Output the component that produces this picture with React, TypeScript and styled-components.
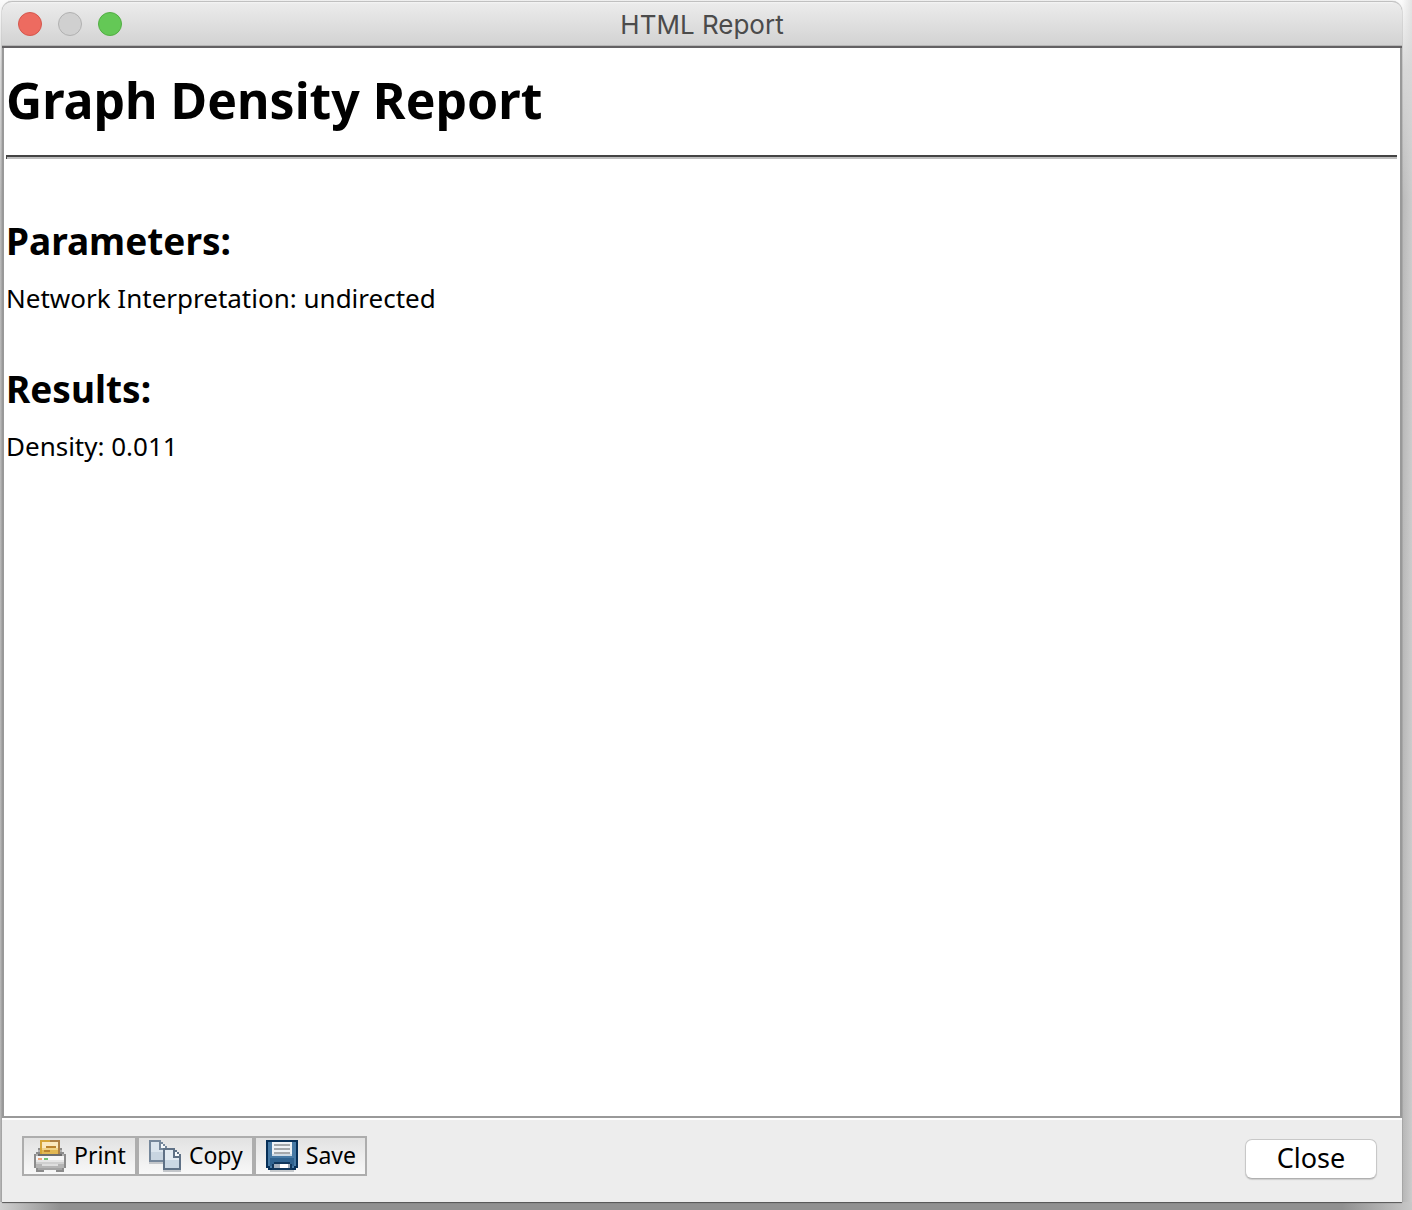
import React from "react";
import styled, { createGlobalStyle } from "styled-components";

const GlobalStyle = createGlobalStyle`
  *, *::before, *::after { box-sizing: border-box; }
  html, body { margin: 0; padding: 0; }
  body { background: #fff; }
`;

const sans = `"Noto Sans", "Open Sans", sans-serif`;

const Desktop = styled.div`
  min-height: 100vh;
  padding: 1px 10px 8px 2px;
  display: flex;
  overflow: hidden;
  background:
    linear-gradient(90deg, #d0d0d0 0, #919191 60px, #919191 calc(100% - 70px), #c8c8c8 100%) bottom / 100% 8px no-repeat,
    linear-gradient(90deg, #b4b4b400, #d8d8d8aa) right / 10px 100% no-repeat,
    linear-gradient(180deg, #fbfbfb 0, #d8d8d8 70px, #b8b8b8 200px, #b4b4b4 100%);
`;

const Window = styled.main`
  flex: 1;
  display: flex;
  flex-direction: column;
  min-width: 0;
  border-radius: 10px 10px 0 0;
  background: #ededed;
  box-shadow: 0 1px 1px #555, 0 0 1px #888;
  font-family: ${sans};
  color: #000;
`;

const TitleBar = styled.header`
  display: grid;
  grid-template-columns: 1fr auto 1fr;
  align-items: center;
  height: 47px;
  padding: 0 16px;
  border-top: 1px solid #c0c0c0;
  border-bottom: 2px solid #636163;
  border-radius: 10px 10px 0 0;
  background: linear-gradient(180deg, #f5f5f5 0, #ebebeb 2px, #d2d2d2 100%);
  box-shadow: inset 0 -1px 0 #b5b5b5;
`;

const Lights = styled.div`
  display: flex;
  gap: 16px;
`;

const Light = styled.button<{ $fill: string; $edge: string }>`
  width: 24px;
  height: 24px;
  padding: 0;
  border: 1px solid ${(p) => p.$edge};
  border-radius: 50%;
  background: ${(p) => p.$fill};
`;

const WindowTitle = styled.span`
  padding-top: 2px;
  font-family: Inter, Roboto, sans-serif;
  font-size: 26px;
  line-height: 32px;
  color: #4b4b4b;
`;

const Report = styled.article`
  flex: 1;
  padding: 0 3px 0 2px;
  border: 2px solid #999;
  border-top: 0;
  background: #fff;
`;

const Heading = styled.h1`
  margin: 18px 0 21px;
  font-size: 50px;
  line-height: 68px;
  font-weight: 700;
`;

const Rule = styled.hr`
  height: 4px;
  margin: 0;
  border: 0;
  border-top: 2px solid #444;
  border-left: 1px solid #444;
  background: #bebebe;
`;

const Section = styled.section`
  padding-top: 59px;

  & + & { padding-top: 48px; }
`;

const SectionTitle = styled.h2`
  margin: 0 0 14px;
  font-size: 37px;
  line-height: 46px;
  font-weight: 700;
`;

const Line = styled.p`
  margin: 0;
  font-size: 26px;
  line-height: 40px;
`;

const Footer = styled.footer`
  display: flex;
  justify-content: space-between;
  align-items: flex-start;
  height: 84px;
  padding: 16px 25px 0 20px;
  border-top: 2px solid #fff;
`;

const Tools = styled.div`
  display: flex;
`;

const ToolButton = styled.button`
  display: flex;
  align-items: center;
  gap: 8px;
  height: 40px;
  padding: 0 9px 0 10px;
  border: 2px solid #adadad;
  background: linear-gradient(180deg, #e2e2e2, #f8f8f8);
  font-family: ${sans};
  font-size: 23px;
  line-height: 30px;
  color: #000;
`;

const ToolLabel = styled.span`
  padding-bottom: 2px;
`;

const CloseButton = styled.button`
  width: 132px;
  height: 40px;
  margin-top: 3px;
  padding: 0 0 2px;
  border: 1px solid #c8c8c8;
  border-bottom-color: #b0b0b0;
  border-radius: 7px;
  background: #fff;
  box-shadow: 0 1px 1px #ccc;
  font-family: ${sans};
  font-size: 27px;
  line-height: 36px;
  color: #000;
`;

const Glyph = styled.svg`
  display: block;
  width: 32px;
  height: 32px;
  flex: none;
`;

const PrintIcon = () => (
  <Glyph viewBox="0 0 16 16" shapeRendering="crispEdges" aria-hidden="true">
    <path fill="#8c8c8c" d="M2 4h12v2h1v1h1v7h-1v2h-4v-1H5v1H1v-2H0V7h1V6h1z" />
    <path fill="#b2b2b2" d="M2 5h12v1H2zM1 7h14v1H1z" />
    <path fill="#f6f6f6" d="M1 8h14v2H1z" />
    <path fill="#e6e6e6" d="M1 10h14v1H1z" />
    <path fill="#cfcfcf" d="M1 11h14v1H1z" />
    <path fill="#b5b5b5" d="M1 12h14v2H1z" />
    <path fill="#dedede" d="M4 12h8v1H4z" />
    <path fill="#a3a3a3" d="M2 14h12v1H2z" />
    <path fill="#6d6d6d" d="M2 7h12v1H2z" />
    <path fill="#d5a535" d="M3 0h10v7H3z" />
    <path fill="#ad8145" d="M8 0h5v7h-1V1H8z" />
    <path fill="#fae9bd" d="M4 1h8v3H4z" />
    <path fill="#f1d487" d="M4 4h8v1H4z" />
    <path fill="#e2b751" d="M4 5h8v2H4z" />
    <path fill="#b9832d" d="M6 3h5v1H6zM5 5h3v1H5z" />
    <path fill="#f0a57a" d="M2 9h2v1H2z" />
    <path fill="#6fbf73" d="M5 9h2v1H5z" />
  </Glyph>
);

const CopyIcon = () => (
  <Glyph viewBox="0 0 16 16" shapeRendering="crispEdges" aria-hidden="true">
    <path fill="#c3c6ca" d="M0 11h7v1H0zM7 15h9v1H7z" />
    <path fill="#75879b" d="M0 0h6v1h1v1h1v1h1v8H0z" />
    <path fill="#dbe5ee" d="M1 1h4v4h3v5H1z" />
    <path fill="#c8d5e1" d="M1 6h7v4H1z" />
    <path fill="#f7fafc" d="M6 2h1v1h1v1H6z" />
    <path fill="#5f7186" d="M7 4h6v1h1v1h1v1h1v8H7z" />
    <path fill="#e3ebf2" d="M8 5h4v4h3v5H8z" />
    <path fill="#cbd8e4" d="M8 10h7v4H8z" />
    <path fill="#f7fafc" d="M13 6h1v1h1v1h-2z" />
  </Glyph>
);

const SaveIcon = () => (
  <Glyph viewBox="0 0 16 16" shapeRendering="crispEdges" aria-hidden="true">
    <path fill="#c6c9cc" d="M2 15h12v1H2z" />
    <path fill="#062f57" d="M0 0h16v14h-1v1H1v-1H0z" />
    <path fill="#477aa5" d="M1 1h14v12h-1v1H2v-1H1z" />
    <path fill="#2f628f" d="M2 9h12v4H2z" />
    <path fill="#eef2f5" d="M3 1h10v7H3z" />
    <path fill="#cfdbe5" d="M3 7h10v1H3z" />
    <path fill="#a4a8ab" d="M4 2h8v1H4zM4 4h8v1H4zM4 6h8v1H4z" />
    <path fill="#10365b" d="M4 11h8v1h1v3H3v-3h1z" />
    <path fill="#a5b1bf" d="M4 12h8v2H4z" />
    <path fill="#fff" d="M7 12h4v2H7z" />
  </Glyph>
);

export default function App() {
  return (
    <>
      <GlobalStyle />
      <Desktop>
        <Window>
          <TitleBar>
            <Lights>
              <Light type="button" aria-label="Close window" $fill="#ed6b60" $edge="#d5574d" />
              <Light type="button" aria-label="Minimize window" $fill="#d0d0d0" $edge="#b1b1b1" />
              <Light type="button" aria-label="Zoom window" $fill="#64c856" $edge="#52ae43" />
            </Lights>
            <WindowTitle>HTML Report</WindowTitle>
          </TitleBar>
          <Report>
            <Heading>Graph Density Report</Heading>
            <Rule />
            <Section>
              <SectionTitle>Parameters:</SectionTitle>
              <Line>Network Interpretation: undirected</Line>
            </Section>
            <Section>
              <SectionTitle>Results:</SectionTitle>
              <Line>Density: 0.011</Line>
            </Section>
          </Report>
          <Footer>
            <Tools>
              <ToolButton type="button"><PrintIcon /><ToolLabel>Print</ToolLabel></ToolButton>
              <ToolButton type="button"><CopyIcon /><ToolLabel>Copy</ToolLabel></ToolButton>
              <ToolButton type="button"><SaveIcon /><ToolLabel>Save</ToolLabel></ToolButton>
            </Tools>
            <CloseButton type="button">Close</CloseButton>
          </Footer>
        </Window>
      </Desktop>
    </>
  );
}
